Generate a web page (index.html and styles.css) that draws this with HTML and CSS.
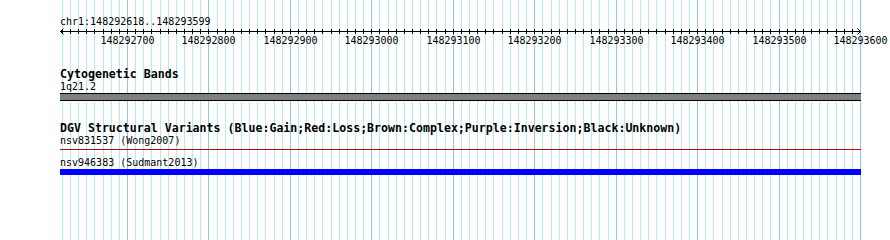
FILE: index.html
```html
<!DOCTYPE html>
<html lang="en">
<head>
    <meta charset="UTF-8">
    <title>chr1:148292618..148293599</title>
    <link rel="stylesheet" href="styles.css">
</head>
<body>
    <div class="browser">
        <svg class="grid" id="grid" width="890" height="240"></svg>

        <div class="view">
            <div class="locus">chr1:148292618..148293599</div>
            <svg class="ruler" id="ruler" width="801" height="20"></svg>

            <div class="track">
                <div class="track-title">Cytogenetic Bands</div>
                <div class="feature-label">1q21.2</div>
                <div class="band"></div>
            </div>

            <div class="track">
                <div class="track-title">DGV Structural Variants (Blue:Gain;Red:Loss;Brown:Complex;Purple:Inversion;Black:Unknown)</div>
                <div class="feature-label">nsv831537 (Wong2007)</div>
                <div class="variant loss"></div>
                <div class="feature-label">nsv946383 (Sudmant2013)</div>
                <div class="variant gain"></div>
            </div>
        </div>
    </div>

    <script>
        // Map a base position to a pixel column
        const origin = 148292700;
        const pxPerBase = 0.81444;
        const viewLeft = 60;

        function toX(base) {
            return Math.round(127 + (base - origin) * pxPerBase);
        }

        const ns = "http://www.w3.org/2000/svg";
        const grid = document.getElementById("grid");
        const ruler = document.getElementById("ruler");

        function line(parent, x1, y1, x2, y2, cls) {
            const el = document.createElementNS(ns, "line");
            el.setAttribute("x1", x1);
            el.setAttribute("y1", y1);
            el.setAttribute("x2", x2);
            el.setAttribute("y2", y2);
            el.setAttribute("class", cls);
            parent.appendChild(el);
        }

        // Grid lines every 10 bases, darker every 100
        for (let base = 148292620; base <= 148293600; base += 10) {
            const x = toX(base) + 0.5;
            const major = base % 100 === 0;
            line(grid, x, 0, x, 240, major ? "major" : "minor");
        }

        // Ruler axis with arrows
        line(ruler, 0, 3.5, 801, 3.5, "axis");
        line(ruler, 0.5, 3.5, 3.5, 0.5, "axis");
        line(ruler, 0.5, 3.5, 3.5, 6.5, "axis");
        line(ruler, 800.5, 3.5, 797.5, 0.5, "axis");
        line(ruler, 800.5, 3.5, 797.5, 6.5, "axis");

        for (let base = 148292620; base <= 148293590; base += 10) {
            const x = toX(base) - viewLeft + 0.5;
            line(ruler, x, 1, x, 6, "tick");
        }

        // Labels every 100 bases
        for (let base = 148292700; base <= 148293600; base += 100) {
            const label = document.createElementNS(ns, "text");
            label.setAttribute("x", toX(base) - viewLeft + 0.5);
            label.setAttribute("y", 16);
            label.setAttribute("class", "tick-label");
            label.textContent = base;
            ruler.appendChild(label);
        }
    </script>
</body>
</html>
```

FILE: styles.css
```css
/* Basic Styling */
body {
    margin: 0;
    background-color: #ffffff;
    font-family: "DejaVu Sans Mono", monospace;
    font-size: 10px;
    color: #000;
}

.browser {
    position: relative;
    width: 890px;
    height: 240px;
    overflow: hidden;
}

/* Grid behind the tracks */
.grid {
    position: absolute;
    left: 0;
    top: 0;
}

.grid .minor {
    stroke: #aeeeee;
    stroke-width: 1;
}

.grid .major {
    stroke: #87cdea;
    stroke-width: 1;
}

.view {
    position: relative;
    margin-left: 60px;
    width: 801px;
}

/* Ruler */
.locus {
    padding-top: 16px;
    line-height: 12px;
}

.ruler {
    display: block;
    overflow: visible;
}

.ruler .axis,
.ruler .tick {
    stroke: #000;
    stroke-width: 1;
}

.tick-label {
    font-family: "DejaVu Sans Mono", monospace;
    font-size: 10px;
    text-anchor: middle;
    fill: #000;
}

/* Tracks */
.track {
    margin-top: 20px;
}

.track-title {
    font-weight: bold;
    font-size: 11.6px;
    line-height: 13px;
    white-space: nowrap;
}

.track + .track .track-title {
    line-height: 14px;
}

.feature-label {
    line-height: 12px;
    white-space: nowrap;
}

.band {
    height: 6px;
    background-color: #808080;
    border-top: 1px solid #000;
    border-bottom: 1px solid #000;
}

.variant.loss {
    height: 1px;
    margin-top: 2px;
    margin-bottom: 7px;
    background-color: #d00000;
}

.variant.gain {
    height: 6px;
    background-color: #0000ff;
}
```
